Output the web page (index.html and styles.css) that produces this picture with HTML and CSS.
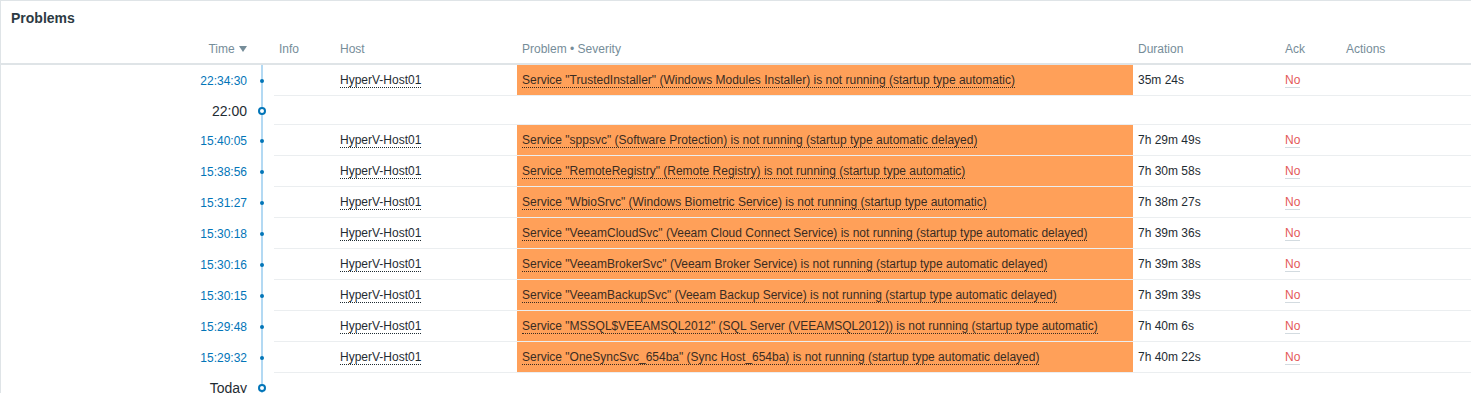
FILE: index.html
```html
<!DOCTYPE html>
<html>
  <head>
    <title>Problems</title>
    <link rel="stylesheet" href="styles.css">
  </head>
  <body>
    <div class="widget">
      <div class="widget-head">
        <h4>Problems</h4>
      </div>
      <table class="problems">
        <colgroup>
          <col class="c-time">
          <col class="c-line">
          <col class="c-info">
          <col class="c-host">
          <col class="c-problem">
          <col class="c-duration">
          <col class="c-ack">
          <col>
        </colgroup>
        <thead>
          <tr>
            <th class="time">Time <span class="arrow"></span></th>
            <th></th>
            <th>Info</th>
            <th>Host</th>
            <th>Problem &bull; Severity</th>
            <th>Duration</th>
            <th>Ack</th>
            <th>Actions</th>
          </tr>
        </thead>
        <tbody>
          <tr>
            <td class="time"><a href="#">22:34:30</a></td>
            <td class="line"><span class="dot"></span></td>
            <td></td>
            <td><a class="host" href="#">HyperV-Host01</a></td>
            <td class="average"><a href="#">Service "TrustedInstaller" (Windows Modules Installer) is not running (startup type automatic)</a></td>
            <td>35m 24s</td>
            <td><a class="ack" href="#">No</a></td>
            <td></td>
          </tr>
          <tr class="sep">
            <td class="time">22:00</td>
            <td class="line"><span class="ring"></span></td>
            <td></td><td></td><td></td><td></td><td></td><td></td>
          </tr>
          <tr>
            <td class="time"><a href="#">15:40:05</a></td>
            <td class="line"><span class="dot"></span></td>
            <td></td>
            <td><a class="host" href="#">HyperV-Host01</a></td>
            <td class="average"><a href="#">Service "sppsvc" (Software Protection) is not running (startup type automatic delayed)</a></td>
            <td>7h 29m 49s</td>
            <td><a class="ack" href="#">No</a></td>
            <td></td>
          </tr>
          <tr>
            <td class="time"><a href="#">15:38:56</a></td>
            <td class="line"><span class="dot"></span></td>
            <td></td>
            <td><a class="host" href="#">HyperV-Host01</a></td>
            <td class="average"><a href="#">Service "RemoteRegistry" (Remote Registry) is not running (startup type automatic)</a></td>
            <td>7h 30m 58s</td>
            <td><a class="ack" href="#">No</a></td>
            <td></td>
          </tr>
          <tr>
            <td class="time"><a href="#">15:31:27</a></td>
            <td class="line"><span class="dot"></span></td>
            <td></td>
            <td><a class="host" href="#">HyperV-Host01</a></td>
            <td class="average"><a href="#">Service "WbioSrvc" (Windows Biometric Service) is not running (startup type automatic)</a></td>
            <td>7h 38m 27s</td>
            <td><a class="ack" href="#">No</a></td>
            <td></td>
          </tr>
          <tr>
            <td class="time"><a href="#">15:30:18</a></td>
            <td class="line"><span class="dot"></span></td>
            <td></td>
            <td><a class="host" href="#">HyperV-Host01</a></td>
            <td class="average"><a href="#">Service "VeeamCloudSvc" (Veeam Cloud Connect Service) is not running (startup type automatic delayed)</a></td>
            <td>7h 39m 36s</td>
            <td><a class="ack" href="#">No</a></td>
            <td></td>
          </tr>
          <tr>
            <td class="time"><a href="#">15:30:16</a></td>
            <td class="line"><span class="dot"></span></td>
            <td></td>
            <td><a class="host" href="#">HyperV-Host01</a></td>
            <td class="average"><a href="#">Service "VeeamBrokerSvc" (Veeam Broker Service) is not running (startup type automatic delayed)</a></td>
            <td>7h 39m 38s</td>
            <td><a class="ack" href="#">No</a></td>
            <td></td>
          </tr>
          <tr>
            <td class="time"><a href="#">15:30:15</a></td>
            <td class="line"><span class="dot"></span></td>
            <td></td>
            <td><a class="host" href="#">HyperV-Host01</a></td>
            <td class="average"><a href="#">Service "VeeamBackupSvc" (Veeam Backup Service) is not running (startup type automatic delayed)</a></td>
            <td>7h 39m 39s</td>
            <td><a class="ack" href="#">No</a></td>
            <td></td>
          </tr>
          <tr>
            <td class="time"><a href="#">15:29:48</a></td>
            <td class="line"><span class="dot"></span></td>
            <td></td>
            <td><a class="host" href="#">HyperV-Host01</a></td>
            <td class="average"><a href="#">Service "MSSQL$VEEAMSQL2012" (SQL Server (VEEAMSQL2012)) is not running (startup type automatic)</a></td>
            <td>7h 40m 6s</td>
            <td><a class="ack" href="#">No</a></td>
            <td></td>
          </tr>
          <tr>
            <td class="time"><a href="#">15:29:32</a></td>
            <td class="line"><span class="dot"></span></td>
            <td></td>
            <td><a class="host" href="#">HyperV-Host01</a></td>
            <td class="average"><a href="#">Service "OneSyncSvc_654ba" (Sync Host_654ba) is not running (startup type automatic delayed)</a></td>
            <td>7h 40m 22s</td>
            <td><a class="ack" href="#">No</a></td>
            <td></td>
          </tr>
          <tr class="sep">
            <td class="time">Today</td>
            <td class="line"><span class="ring"></span></td>
            <td></td><td></td><td></td><td></td><td></td><td></td>
          </tr>
        </tbody>
      </table>
    </div>
  </body>
</html>
```

FILE: styles.css
```css
body {
  font-family: "Liberation Sans", Arial, sans-serif;
  font-size: 12px;
  color: #1f2c33;
  margin: 0;
  padding: 0;
  background-color: #ffffff;
}

a {
  text-decoration: none;
  color: inherit;
}

.widget {
  border-top: 1px solid #dfe4e7;
  border-left: 1px solid #dfe4e7;
  background-color: #ffffff;
}

.widget-head {
  padding: 8px 10px 8px 10px;
}

.widget-head h4 {
  margin: 0;
  font-size: 14px;
  line-height: 18px;
  font-weight: bold;
  color: #2c3a43;
}

.problems {
  width: 100%;
  table-layout: fixed;
  border-collapse: separate;
  border-spacing: 0;
}

.c-time { width: 251px; }
.c-line { width: 22px; }
.c-info { width: 61px; }
.c-host { width: 182px; }
.c-problem { width: 616px; }
.c-duration { width: 147px; }
.c-ack { width: 61px; }

.problems th {
  height: 28px;
  padding: 0 5px;
  text-align: left;
  font-weight: normal;
  color: #768d99;
  border-bottom: 2px solid #dfe4e7;
  white-space: nowrap;
}

.problems th.time {
  text-align: right;
}

/* sort arrow */
.problems th .arrow {
  display: inline-block;
  width: 0;
  height: 0;
  margin-left: 1px;
  border-left: 4px solid transparent;
  border-right: 4px solid transparent;
  border-top: 6px solid #768d99;
  vertical-align: 1px;
}

.problems td {
  height: 30px;
  padding: 0 5px;
  white-space: nowrap;
  border-bottom: 1px solid #ebeef0;
  vertical-align: middle;
}

.problems td.time {
  text-align: right;
  border-bottom: none;
  color: #0275b8;
}

.problems td.line {
  padding: 0;
  border-bottom: none;
  background: linear-gradient(#b3d9f3, #b3d9f3) no-repeat 9px 0 / 2px 100%;
}

.dot {
  display: block;
  width: 4px;
  height: 4px;
  margin-left: 8px;
  border-radius: 50%;
  background-color: #0275b8;
}

.ring {
  display: block;
  width: 4px;
  height: 4px;
  margin-left: 6px;
  border: 2px solid #0275b8;
  border-radius: 50%;
  background-color: #ffffff;
}

.sep td {
  height: 28px;
}

.sep td.time {
  font-size: 14px;
  color: #1f2c33;
}

.host {
  border-bottom: 1px dotted #1f2c33;
}

.average {
  background-color: #ffa059;
}

.average a {
  color: #3a2c22;
  border-bottom: 1px dotted #3a2c22;
}

.ack {
  color: #e45959;
  border-bottom: 1px solid #d3dbe0;
}
```
